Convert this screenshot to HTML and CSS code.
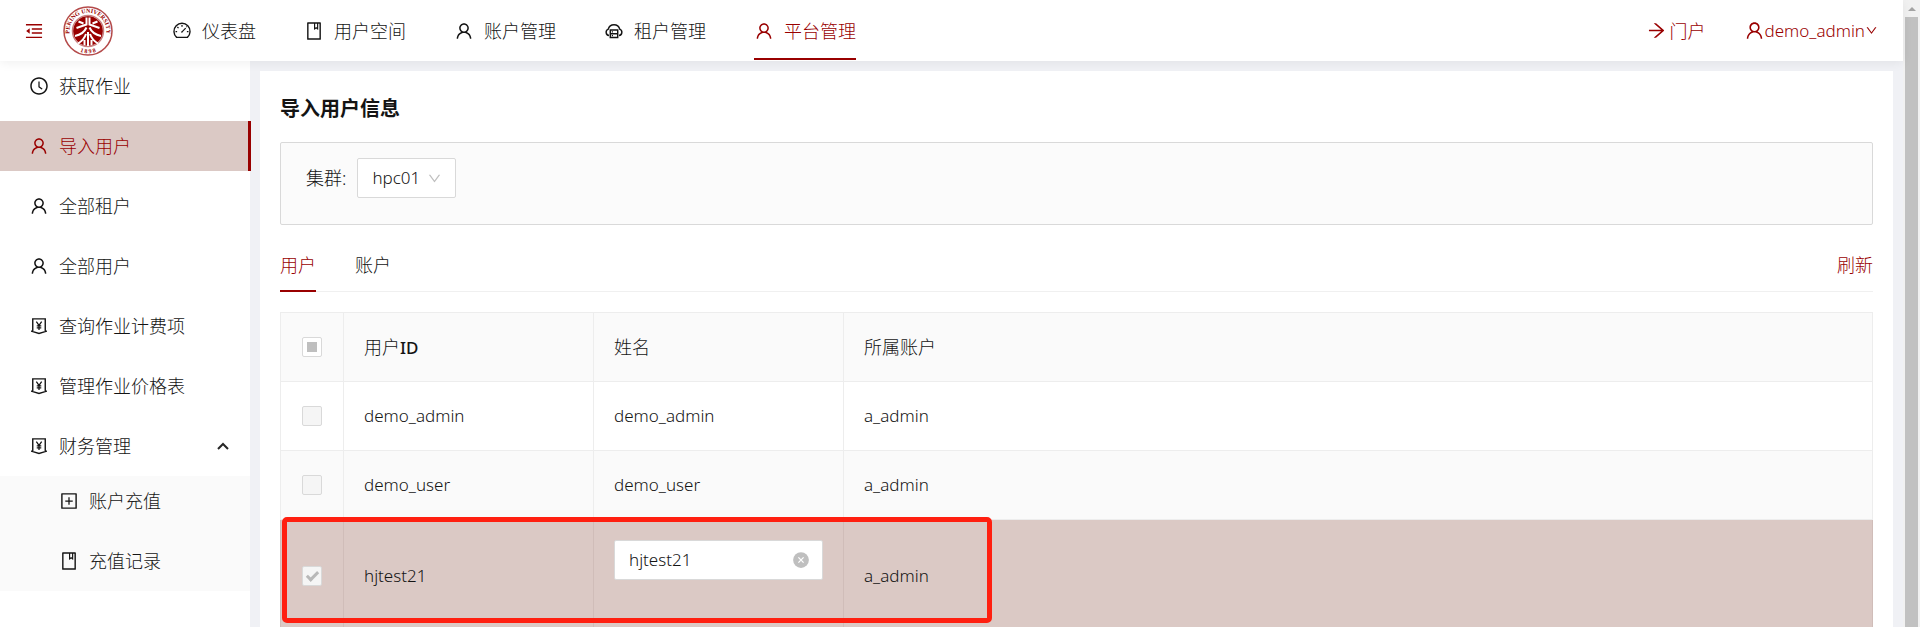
FILE: index.html
```html
<!DOCTYPE html>
<html lang="zh-CN">
<head>
<meta charset="utf-8">
<title>导入用户信息</title>
<link rel="stylesheet" href="styles.css">
</head>
<body>
<svg class="defs" aria-hidden="true">
  <symbol id="user" viewBox="0 0 1024 1024"><path d="M858.5 763.6a374 374 0 00-80.6-119.5 375.63 375.63 0 00-119.5-80.6c-.4-.2-.8-.3-1.2-.5C719.5 518 760 444.7 760 362c0-137-111-248-248-248S264 225 264 362c0 82.7 40.5 156 102.8 201.1-.4.2-.8.3-1.2.5-44.8 18.9-85 46-119.5 80.6a375.63 375.63 0 00-80.6 119.5A371.7 371.7 0 00136 901.8a8 8 0 008 8.2h60c4.4 0 7.9-3.5 8-7.8 2-77.2 33-149.5 87.8-204.3 56.7-56.7 132-87.9 212.2-87.9s155.5 31.2 212.2 87.9C779 752.7 810 825 812 902.2c.1 4.4 3.6 7.8 8 7.8h60a8 8 0 008-8.2c-1-47.8-10.9-94.3-29.5-138.2zM512 534c-45.9 0-89.1-17.9-121.6-50.4S340 407.9 340 362c0-45.9 17.9-89.1 50.4-121.6S466.1 190 512 190s89.1 17.9 121.6 50.4S684 316.1 684 362c0 45.9-17.9 89.1-50.4 121.6S557.9 534 512 534z"/></symbol>
  <symbol id="clock" viewBox="0 0 1024 1024"><path d="M512 64C264.6 64 64 264.6 64 512s200.6 448 448 448 448-200.6 448-448S759.4 64 512 64zm0 820c-205.4 0-372-166.6-372-372s166.6-372 372-372 372 166.6 372 372-166.6 372-372 372z"/><path d="M686.7 638.6L544.1 535.5V288c0-4.4-3.6-8-8-8H488c-4.4 0-8 3.6-8 8v275.4c0 2.6 1.2 5 3.3 6.5l165.4 120.6c3.6 2.6 8.6 1.8 11.2-1.7l28.6-39c2.6-3.7 1.8-8.7-1.8-11.2z"/></symbol>
  <symbol id="book" viewBox="0 0 1024 1024"><path d="M832 64H192c-17.7 0-32 14.3-32 32v832c0 17.7 14.3 32 32 32h640c17.7 0 32-14.3 32-32V96c0-17.7-14.3-32-32-32zm-260 72h96v209.9L621.5 312 572 347.4V136zm220 752H232V136h280v296.9c0 3.3 1 6.6 3 9.3a15.9 15.9 0 0022.3 3.7l83.8-59.9 81.4 59.4c2.7 2 6 3.1 9.4 3.1 8.8 0 16-7.2 16-16V136h64v752z"/></symbol>
  <symbol id="down" viewBox="0 0 1024 1024"><path d="M884 256h-75c-5.1 0-9.9 2.5-12.9 6.6L512 654.2 227.9 262.6c-3-4.1-7.8-6.6-12.9-6.6h-75c-6.5 0-10.3 7.4-6.5 12.7l352.6 486.1c12.8 17.6 39 17.6 51.7 0l352.6-486.1c3.9-5.3.1-12.7-6.4-12.7z"/></symbol>
  <symbol id="plus" viewBox="0 0 1024 1024"><path d="M328 544h152v152c0 4.4 3.6 8 8 8h48c4.4 0 8-3.6 8-8V544h152c4.4 0 8-3.6 8-8v-48c0-4.4-3.6-8-8-8H544V328c0-4.4-3.6-8-8-8h-48c-4.4 0-8 3.6-8 8v152H328c-4.4 0-8 3.6-8 8v48c0 4.4 3.6 8 8 8z"/><path d="M880 112H144c-17.7 0-32 14.3-32 32v736c0 17.7 14.3 32 32 32h736c17.7 0 32-14.3 32-32V144c0-17.7-14.3-32-32-32zm-40 728H184V184h656v656z"/></symbol>
  <symbol id="arrow" viewBox="0 0 1024 1024"><path d="M869 487.8L491.2 159.9c-2.9-2.5-6.6-3.9-10.5-3.9h-88.5c-7.4 0-10.8 9.2-5.2 14l350.2 304H152c-4.4 0-8 3.6-8 8v60c0 4.4 3.6 8 8 8h585.1L386.9 854c-5.6 4.9-2.2 14 5.2 14h91.5c1.9 0 3.8-.7 5.2-2L869 536.2a32.07 32.07 0 000-48.4z"/></symbol>
  <symbol id="money" viewBox="0 0 1024 1024"><g fill="none" stroke="currentColor" stroke-width="72"><path d="M192 770V148H832V770"/><path d="M110 770L200 800L512 892L824 800L914 770"/><path d="M376 286L512 484L648 286M512 470V722M396 510H628M396 612H628" stroke-width="64"/></g></symbol>
  <symbol id="dashboard" viewBox="0 0 1024 1024"><g fill="none" stroke="currentColor" stroke-width="72"><path d="M238 838A412 412 0 1 1 786 838Z" stroke-linejoin="round"/><path d="M512 205V290M275 305L335 365M180 545H262M762 545H844M500 570L700 365M735 285L755 305" stroke-width="64"/><circle cx="500" cy="568" r="34" fill="currentColor" stroke="none"/></g></symbol>
  <symbol id="cloud" viewBox="0 0 1024 1024"><g fill="none" stroke="currentColor" stroke-width="74"><path d="M255 746A173 173 0 0 1 218 415A304 304 0 0 1 806 415A173 173 0 0 1 769 746"/><path d="M322 462H702V846H322ZM322 654H702"/><path d="M400 558H460M400 750H460" stroke-width="56"/></g></symbol>
  <symbol id="fold" viewBox="0 0 1024 1024"><path d="M100 156h824v72H100zM400 376h524v72H400zM400 580h524v72H400zM100 800h824v72H100zM112 514L292 370V658Z"/></symbol>
  <symbol id="clear" viewBox="0 0 1024 1024"><circle cx="512" cy="512" r="448"/><path d="M365 365L659 659M659 365L365 659" stroke="#fff" stroke-width="72"/></symbol>
</svg>

<div class="window">
  <div class="app">
    <header class="header">
      <button class="fold" aria-label="收起菜单"><svg class="icon"><use href="#fold"/></svg></button>
      <a class="logo" href="#" aria-label="Peking University">
        <svg viewBox="0 0 100 100">
          <defs>
            <path id="arc-top" d="M18 69A37 37 0 1 1 82 69"/>
            <path id="arc-bottom" d="M20 83A45 45 0 0 0 80 83"/>
          </defs>
          <circle cx="50" cy="50" r="48" fill="#fff" stroke="#b44a4a" stroke-width="3"/>
          <circle cx="50" cy="50" r="30" fill="#900"/>
          <circle cx="50" cy="50" r="31" fill="none" stroke="#c98080" stroke-width="3"/>
          <text class="seal"><textPath href="#arc-top" startOffset="50%" text-anchor="middle">PEKING UNIVERSITY</textPath></text>
          <text class="seal"><textPath href="#arc-bottom" startOffset="50%" text-anchor="middle">1 8 9 8</textPath></text>
          <g fill="none" stroke="#fff" stroke-width="4">
            <path d="M47 23V37L27 44M53 23V37L73 44M31 31L41 35M69 31L59 35"/>
            <path d="M47 43C43 52 34 58 24 60M53 43C57 52 66 58 76 60M50 52V80M46 56C43 65 37 71 30 75M54 56C57 65 63 71 70 75M43 68V78M57 68V78"/>
          </g>
        </svg>
      </a>
      <nav class="topnav">
        <a href="#"><svg class="icon"><use href="#dashboard"/></svg>仪表盘</a>
        <a href="#"><svg class="icon"><use href="#book"/></svg>用户空间</a>
        <a href="#"><svg class="icon"><use href="#user"/></svg>账户管理</a>
        <a href="#"><svg class="icon"><use href="#cloud"/></svg>租户管理</a>
        <a href="#" class="active"><svg class="icon"><use href="#user"/></svg>平台管理</a>
      </nav>
      <div class="account">
        <a href="#" class="portal"><svg class="icon large"><use href="#arrow"/></svg>门户</a>
        <button class="profile"><svg class="icon large"><use href="#user"/></svg><span>demo_admin</span><svg class="icon small"><use href="#down"/></svg></button>
      </div>
    </header>

    <div class="body">
      <aside class="sidebar">
        <nav class="menu">
          <a href="#"><svg class="icon"><use href="#clock"/></svg>获取作业</a>
          <a href="#" class="active"><svg class="icon"><use href="#user"/></svg>导入用户</a>
          <a href="#"><svg class="icon"><use href="#user"/></svg>全部租户</a>
          <a href="#"><svg class="icon"><use href="#user"/></svg>全部用户</a>
          <a href="#"><svg class="icon"><use href="#money"/></svg>查询作业计费项</a>
          <a href="#"><svg class="icon"><use href="#money"/></svg>管理作业价格表</a>
          <button aria-expanded="true"><svg class="icon"><use href="#money"/></svg>财务管理<svg class="caret" viewBox="0 0 12 8"><path d="M1 7L6 2L11 7"/></svg></button>
        </nav>
        <nav class="menu submenu">
          <a href="#"><svg class="icon"><use href="#plus"/></svg>账户充值</a>
          <a href="#"><svg class="icon"><use href="#book"/></svg>充值记录</a>
        </nav>
      </aside>

      <main class="main">
        <section class="card">
          <h1>导入用户信息</h1>
          <form class="filter">
            <label for="cluster">集群:</label>
            <span class="select">
              <select id="cluster"><option>hpc01</option></select>
              <svg class="icon arrow"><use href="#down"/></svg>
            </span>
          </form>
          <div class="tabs">
            <button class="tab active">用户</button>
            <button class="tab">账户</button>
            <a href="#" class="refresh">刷新</a>
          </div>
          <div class="tablebox">
            <table>
              <colgroup><col class="c-check"><col class="c-text"><col class="c-text"><col></colgroup>
              <thead>
                <tr><th><input type="checkbox" class="partial" aria-label="全选"></th><th>用户<b>ID</b></th><th>姓名</th><th>所属账户</th></tr>
              </thead>
              <tbody>
                <tr><td><input type="checkbox" disabled aria-label="demo_admin"></td><td>demo_admin</td><td>demo_admin</td><td>a_admin</td></tr>
                <tr class="hover"><td><input type="checkbox" disabled aria-label="demo_user"></td><td>demo_user</td><td>demo_user</td><td>a_admin</td></tr>
                <tr class="selected"><td><input type="checkbox" checked disabled aria-label="hjtest21"></td><td>hjtest21</td><td><div class="field"><input type="text" value="hjtest21" aria-label="姓名"><button aria-label="清除"><svg class="icon"><use href="#clear"/></svg></button></div></td><td>a_admin</td></tr>
              </tbody>
            </table>
            <div class="highlight"></div>
          </div>
        </section>
      </main>
    </div>
  </div>
  <div class="scrollbar" aria-hidden="true"><span class="up"></span><span class="thumb"></span></div>
</div>
</body>
</html>
```

FILE: styles.css
```css
* { box-sizing: border-box; }
body {
  margin: 0;
  color: #141414;
  font-family: "Noto Sans", "Noto Sans CJK SC", sans-serif;
  font-size: 18px;
  font-weight: 300;
  line-height: 28px;
}
a { color: inherit; text-decoration: none; }
button, input, select { font: inherit; color: inherit; }
button { border: 0; padding: 0; background: none; cursor: pointer; }

.defs { position: absolute; width: 0; height: 0; }
.icon { flex: none; width: 20px; height: 20px; fill: currentColor; }
.icon.large { width: 21px; height: 21px; }
.icon.small { width: 13px; height: 13px; }

.window { display: flex; height: 100vh; overflow: hidden; }
.app { flex: 1; display: flex; flex-direction: column; min-width: 0; }

.header {
  z-index: 1;
  flex: none;
  display: flex;
  align-items: stretch;
  height: 61px;
  padding: 0 25px 0 24px;
  background: #fff;
  box-shadow: 0 2px 10px #00000010;
}
.header > *, .topnav a, .account a, .account button { display: flex; align-items: center; }
.fold, .account { color: #900; }
.logo { margin: 0 59px 0 19px; }
.logo svg { width: 50px; height: 50px; }
.seal { fill: #900; font: 700 12px "Liberation Serif", serif; }
.topnav { gap: 48px; }
.header .topnav { align-items: stretch; }
.topnav a { gap: 10px; padding-top: 3px; border-bottom: 2px solid transparent; margin-bottom: 1px; }
.topnav .active { color: #900; border-color: #900; }
.account { gap: 38px; margin-left: auto; }
.portal { gap: 3px; }
.profile { font-size: 17px; }

.body { flex: 1; display: flex; min-height: 0; }
.sidebar { position: relative; flex: none; width: 250px; background: #fff; }
.menu { display: flex; flex-direction: column; gap: 10px; }
.menu a, .menu button {
  display: flex;
  align-items: center;
  gap: 10px;
  height: 50px;
  padding: 0 21px 0 29px;
}
.menu .active { margin-right: -1px; color: #900; background: #dbc9c5; border-right: 3px solid #900; }
.caret { width: 12px; height: 8px; margin-left: auto; fill: none; stroke: #262626; stroke-width: 2; }
.menu.submenu { margin-top: 5px; padding-bottom: 5px; background: #fafafa; }
.submenu a { padding-left: 59px; }

.main { flex: 1; min-width: 0; padding: 10px; background: #f0f1f5; }
.card { padding: 20px; background: #fff; min-height: 100%; }
h1 { margin: 4px 0 19px; font-size: 20px; font-weight: 700; line-height: 28px; }
.filter {
  display: flex;
  align-items: center;
  gap: 11px;
  padding: 15px 25px 26px;
  background: #fbfbfb;
  border: 1px solid #d9d9d9;
  border-radius: 2px;
}
.select { display: flex; align-items: center; }
.select select {
  appearance: none;
  width: 99px;
  height: 40px;
  padding: 0 14px;
  border: 1px solid #d9d9d9;
  border-radius: 2px;
  background: #fff;
  font-size: 17px;
}
.select .arrow { width: 15px; height: 15px; margin-left: -29px; color: #bfbfbf; pointer-events: none; }
.tabs { display: flex; gap: 39px; margin: 14px 0 20px; border-bottom: 1px solid #f0f0f0; }
.tab { padding: 12px 0 11px; margin-bottom: -1px; border-bottom: 2px solid transparent; }
.tab.active { color: #900; border-color: #900; }
.refresh { margin-left: auto; padding: 12px 0 11px; color: #900; }

.tablebox { position: relative; }
table { width: 100%; table-layout: fixed; border-collapse: collapse; }
.c-check { width: 63px; }
.c-text { width: 250px; }
th, td { height: 69px; padding: 20px; border: 1px solid #ededed; text-align: left; }
th { padding: 18px 20px; background: #fafafa; font-weight: 300; }
th b { font-size: 17px; font-weight: 500; }
td { font-size: 17px; }
th:first-child, td:first-child { padding: 0; text-align: center; }
.hover td { background: #fafafa; }
.selected td { background: #dbc9c5; border-color: #d0bdb9; }
input[type="checkbox"] {
  appearance: none;
  display: grid;
  place-items: center;
  width: 20px;
  height: 20px;
  margin: 0 auto;
  border: 1px solid #d9d9d9;
  border-radius: 2px;
  background: #fff;
}
input[type="checkbox"]:disabled { background: #f5f5f5; }
.partial::before { content: ""; width: 10px; height: 10px; background: #bfbfbf; }
input[type="checkbox"]:checked::before {
  content: "";
  box-sizing: border-box;
  width: 7px;
  height: 12px;
  margin-bottom: 3px;
  border: solid #b8b8b8;
  border-width: 0 3px 3px 0;
  transform: rotate(45deg);
}
.field {
  display: flex;
  align-items: center;
  height: 40px;
  margin-bottom: 32px;
  padding: 0 12px 0 14px;
  border: 1px solid #d9d9d9;
  border-radius: 2px;
  background: #fff;
}
.field input { flex: 1; min-width: 0; padding: 0; border: 0; outline: 0; background: none; }
.field button { display: flex; color: #bfbfbf; }
.field .icon { width: 18px; height: 18px; }
.highlight {
  position: absolute;
  left: 2px;
  top: 205px;
  width: 710px;
  height: 106px;
  border: 5px solid #ff1f10;
  border-radius: 5px;
  pointer-events: none;
}

.scrollbar { flex: none; display: flex; flex-direction: column; align-items: center; width: 17px; background: #f1f1f1; }
.up { height: 17px; display: flex; align-items: center; }
.up::before { content: ""; border: 4px solid transparent; border-top: 0; border-bottom-color: #a3a3a3; }
.thumb { flex: 1; width: 13px; background: #c1c1c1; }
```
